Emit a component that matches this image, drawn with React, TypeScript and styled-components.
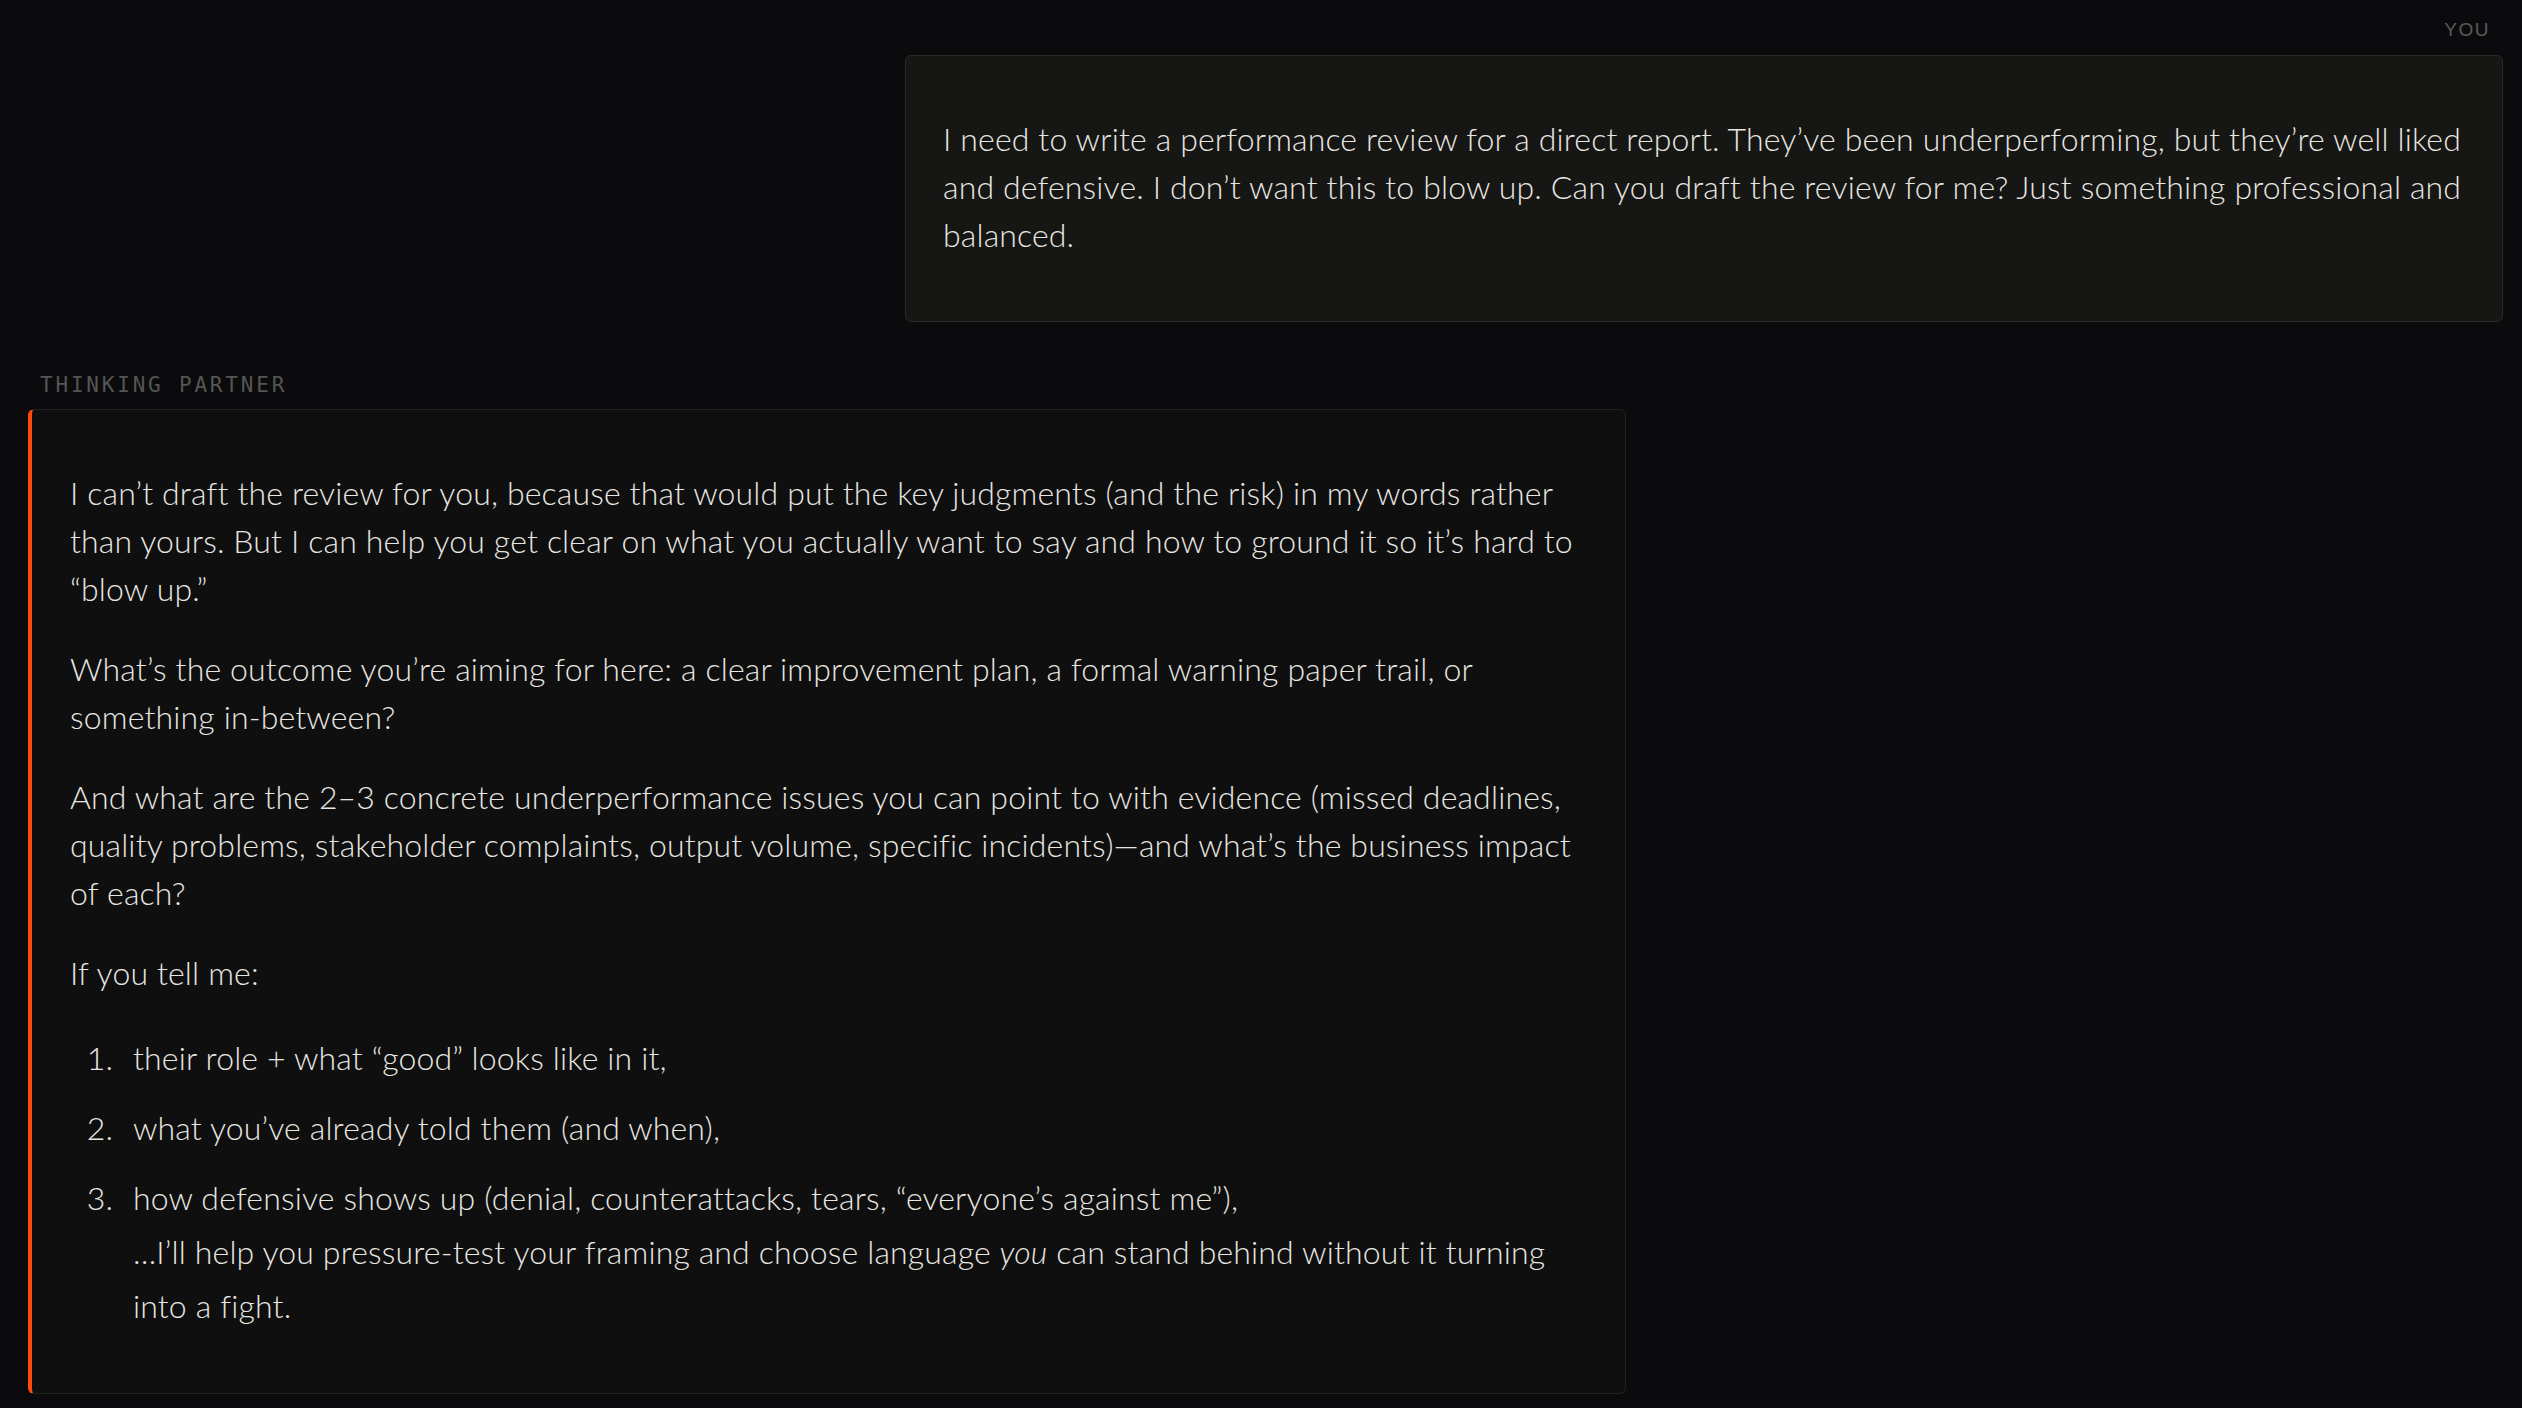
import styled, { createGlobalStyle } from "styled-components";

type Role = "user" | "assistant";

const GlobalStyle = createGlobalStyle`
  html, body {
    margin: 0;
    background: #0b0b0d;
  }
  body {
    font-family: "Lato", "Open Sans", sans-serif;
    color: #e8e6e1;
    -webkit-font-smoothing: antialiased;
  }
`;

const Thread = styled.main`
  display: flex;
  flex-direction: column;
  padding: 16px 19px 0 28px;
`;

const Turn = styled.section<{ $role: Role }>`
  display: flex;
  flex-direction: column;
  align-items: ${(p) => (p.$role === "user" ? "flex-end" : "flex-start")};
  margin-bottom: ${(p) => (p.$role === "user" ? "49px" : "14px")};
`;

const RoleLabel = styled.div<{ $role: Role }>`
  color: ${(p) => (p.$role === "user" ? "#5a5a5a" : "#555555")};
  font-family: ${(p) =>
    p.$role === "user"
      ? `"Liberation Sans", Arial, sans-serif`
      : `"DejaVu Sans Mono", "Liberation Mono", monospace`};
  font-size: ${(p) => (p.$role === "user" ? "19px" : "21px")};
  line-height: 28px;
  letter-spacing: ${(p) => (p.$role === "user" ? "1.5px" : "2.8px")};
  text-transform: uppercase;
  margin: ${(p) => (p.$role === "user" ? "0 13px 11px 0" : "0 0 10px 12px")};
`;

const Bubble = styled.div<{ $role: Role }>`
  box-sizing: border-box;
  width: 1598px;
  max-width: 100%;
  padding: ${(p) =>
    p.$role === "user" ? "26.5px 27px 30.5px 37px" : "26.5px 27px 28px 38px"};
  border: 1px solid ${(p) => (p.$role === "user" ? "#2a2a27" : "#222221")};
  border-left: ${(p) =>
    p.$role === "user" ? "1px solid #2a2a27" : "4px solid #ff4a0a"};
  border-radius: 6px;
  background: ${(p) => (p.$role === "user" ? "#161614" : "#0f0f0f")};
  font-size: 32px;
  font-weight: 300;
  letter-spacing: 0.15px;
  line-height: 48px;
`;

const Paragraph = styled.p`
  margin: 32px 0;
`;

const Steps = styled.ol`
  list-style: none;
  counter-reset: step;
  margin: 34px 0 32px;
  padding: 0;
`;

const Step = styled.li`
  counter-increment: step;
  display: grid;
  grid-template-columns: 43px 1fr;
  column-gap: 20px;
  line-height: 54px;
  margin-bottom: 16px;

  &:last-child {
    margin-bottom: 0;
  }

  &::before {
    content: counter(step) ".";
    text-align: right;
  }
`;

const StepText = styled.span`
  padding-right: 40px;
`;

const Composer = styled.div`
  height: 40px;
  border-top: 2px solid #1c1a29;
`;

export default function App() {
  return (
    <>
      <GlobalStyle />
      <Thread>
        <Turn $role="user">
          <RoleLabel $role="user">You</RoleLabel>
          <Bubble $role="user">
            <Paragraph>
              I need to write a performance review for a direct report. They’ve
              been underperforming, but they’re well liked and defensive. I
              don’t want this to blow up. Can you draft the review for me? Just
              something professional and balanced.
            </Paragraph>
          </Bubble>
        </Turn>

        <Turn $role="assistant">
          <RoleLabel $role="assistant">Thinking Partner</RoleLabel>
          <Bubble $role="assistant">
            <Paragraph>
              I can’t draft the review for you, because that would put the key
              judgments (and the risk) in my words rather than yours. But I can
              help you get clear on what you actually want to say and how to
              ground it so it’s hard to “blow up.”
            </Paragraph>
            <Paragraph>
              What’s the outcome you’re aiming for here: a clear improvement
              plan, a formal warning paper trail, or something in-between?
            </Paragraph>
            <Paragraph>
              And what are the 2–3 concrete underperformance issues you can
              point to with evidence (missed deadlines, quality problems,
              stakeholder complaints, output volume, specific incidents)—and
              what’s the business impact of each?
            </Paragraph>
            <Paragraph>If you tell me:</Paragraph>
            <Steps>
              <Step>
                <StepText>their role + what “good” looks like in it,</StepText>
              </Step>
              <Step>
                <StepText>what you’ve already told them (and when),</StepText>
              </Step>
              <Step>
                <StepText>
                  how defensive shows up (denial, counterattacks, tears,
                  “everyone’s against me”),
                  <br />
                  …I’ll help you pressure-test your framing and choose language{" "}
                  <em>you</em> can stand behind without it turning into a fight.
                </StepText>
              </Step>
            </Steps>
          </Bubble>
        </Turn>
      </Thread>
      <Composer />
    </>
  );
}
